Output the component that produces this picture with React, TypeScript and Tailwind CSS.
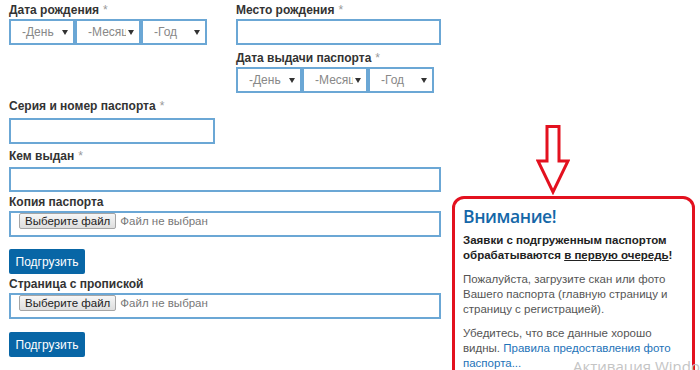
import React from 'react';

function Label({ text, req }: { text: string; req?: boolean }) {
  return (
    <div className="text-[12px] font-bold leading-[14px] text-[#333]">
      {text}
      {req && <span className="ml-[4px] font-normal text-[#999]">*</span>}
    </div>
  );
}

function DateSelects() {
  const items = ['-День', '-Месяц', '-Год'];
  return (
    <div className="flex">
      {items.map((t) => (
        <div
          key={t}
          className="flex h-[26px] w-[66px] items-center justify-between border-2 border-[#6ba7d5] pl-[11px] pr-[5px] text-[12px] text-[#888]"
        >
          <span className="w-[38px] overflow-hidden whitespace-nowrap">{t}</span>
          <svg width="6" height="5" viewBox="0 0 6 5">
            <path d="M0 0 H6 L3 5 Z" fill="#333" />
          </svg>
        </div>
      ))}
    </div>
  );
}

function FileBox() {
  return (
    <div className="flex h-[26px] items-start border-2 border-[#6ba7d5] pl-[8px] text-[11.5px]">
      <span className="rounded-[2px] border border-[#a5a5a5] bg-gradient-to-b from-[#f6f6f6] to-[#dedede] px-[5px] leading-[14px] text-[#222]">
        Выберите файл
      </span>
      <span className="ml-[4px] leading-[16px] text-[#777]">Файл не выбран</span>
    </div>
  );
}

function UploadBtn() {
  return (
    <div className="flex h-[25px] w-[76px] items-center justify-center rounded-[2px] bg-[#0866a6] text-[12px] text-white">
      Подгрузить
    </div>
  );
}

export default function App() {
  return (
    <div className="relative h-[370px] w-[700px] overflow-hidden bg-white font-['Liberation_Sans',Arial,sans-serif]">
      <div className="flex">
        {/* Форма */}
        <div className="ml-[9px] w-[432px] pt-[3px]">
          <div className="flex">
            <div className="w-[227px]">
              <Label text="Дата рождения" req />
              <div className="mt-[2px]">
                <DateSelects />
              </div>
            </div>
            <div className="w-[205px]">
              <Label text="Место рождения" req />
              <div className="mt-[2px] h-[26px] border-2 border-[#6ba7d5]" />
              <div className="mt-[6px]">
                <Label text="Дата выдачи паспорта" req />
              </div>
              <div className="mt-[2px]">
                <DateSelects />
              </div>
            </div>
          </div>
          <div className="mt-[6px]">
            <Label text="Серия и номер паспорта" req />
          </div>
          <div className="mt-[5px] h-[26px] w-[206px] border-2 border-[#6ba7d5]" />
          <div className="mt-[5px]">
            <Label text="Кем выдан" req />
          </div>
          <div className="mt-[4px] h-[25px] border-2 border-[#6ba7d5]" />
          <div className="mt-[3px]">
            <Label text="Копия паспорта" />
          </div>
          <div className="mt-[2px]">
            <FileBox />
          </div>
          <div className="mt-[12px]">
            <UploadBtn />
          </div>
          <div className="mt-[3px]">
            <Label text="Страница с пропиской" />
          </div>
          <div className="mt-[2px]">
            <FileBox />
          </div>
          <div className="mt-[13px]">
            <UploadBtn />
          </div>
        </div>

        {/* Внимание */}
        <div className="ml-[11px] w-[243px] pt-[125px]">
          <svg width="34" height="70" viewBox="0 0 34 70" className="ml-[84px]">
            <path
              d="M11 1.5 H23 V36 H32 L17 67 L2 36 H11 Z"
              fill="white"
              stroke="#e3111f"
              strokeWidth="3"
              strokeLinejoin="miter"
            />
          </svg>
          <div className="mt-[1px] h-[200px] rounded-[12px] border-[3px] border-[#e3111f] px-[8px] pt-[5px]">
            <div className="font-['Open_Sans',sans-serif] text-[17.5px] font-semibold leading-[24px] tracking-[-0.4px] text-[#1467a8]">
              Внимание!
            </div>
            <p className="mt-[5px] text-[11.5px] font-bold leading-[15px] text-[#222]">
              Заявки с подгруженным паспортом обрабатываются{' '}
              <span className="underline">в первую очередь</span>!
            </p>
            <p className="mt-[9px] text-[11.5px] leading-[15px] text-[#555]">
              Пожалуйста, загрузите скан или фото Вашего паспорта (главную страницу и страницу с регистрацией).
            </p>
            <p className="mt-[9px] text-[11.5px] leading-[15px] text-[#555]">
              Убедитесь, что все данные хорошо видны.{' '}
              <span className="text-[#1d72b8]">Правила предоставления фото паспорта...</span>
            </p>
          </div>
        </div>
      </div>

      {/* водяной знак */}
      <div className="absolute left-[573px] top-[355px] whitespace-nowrap font-['Open_Sans',sans-serif] text-[15px] leading-[22px] text-[#c4c4c4]">
        Активация Windows
      </div>
    </div>
  );
}
